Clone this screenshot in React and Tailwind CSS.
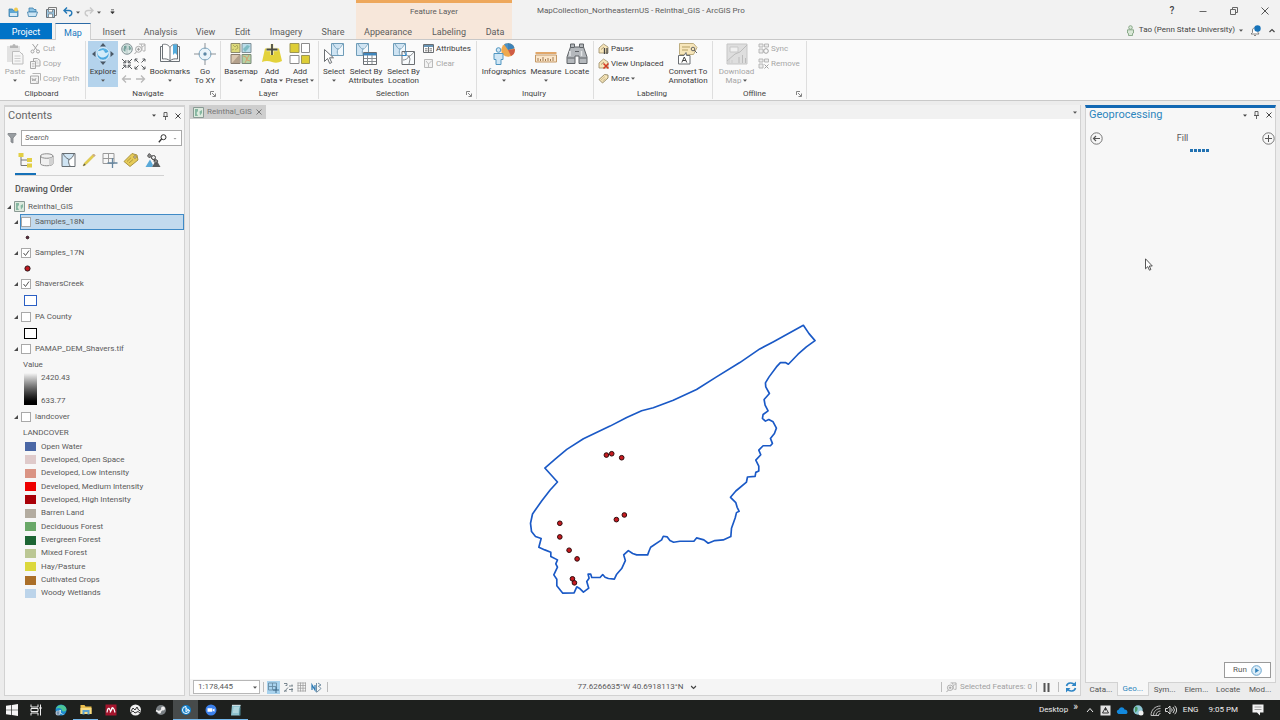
import { useState } from 'react';

const blue = '#2f86c6';
const dark = '#6a6e72';
const teal = '#6f9cb8';
const pale = '#cfe4f3';
const sand = '#f7e6ba';

const mainTabs = [
  { label: 'Insert', width: 'w-[46px]' },
  { label: 'Analysis', width: 'w-[47px]' },
  { label: 'View', width: 'w-[43px]' },
  { label: 'Edit', width: 'w-[31px]' },
  { label: 'Imagery', width: 'w-[56px]' },
  { label: 'Share', width: 'w-[38px]' },
];

const layerTabs = [
  { label: 'Appearance', width: 'w-[64px]' },
  { label: 'Labeling', width: 'w-[58px]' },
  { label: 'Data', width: 'w-[34px]' },
];

const landcover = [
  ['Open Water', 'bg-[#4a67a5]'],
  ['Developed, Open Space', 'bg-[#dfcaca]'],
  ['Developed, Low Intensity', 'bg-[#da9484]'],
  ['Developed, Medium Intensity', 'bg-[#ee0000]'],
  ['Developed, High Intensity', 'bg-[#a90008]'],
  ['Barren Land', 'bg-[#b3aca0]'],
  ['Deciduous Forest', 'bg-[#69a868]'],
  ['Evergreen Forest', 'bg-[#1d6534]'],
  ['Mixed Forest', 'bg-[#bbc794]'],
  ['Hay/Pasture', 'bg-[#dcd83c]'],
  ['Cultivated Crops', 'bg-[#ab6f28]'],
  ['Woody Wetlands', 'bg-[#bcd4ea]'],
];

const samplePoints = [
  [319, 435], [335, 431], [365, 443], [373, 615], [349, 629], [179, 640],
  [179, 681], [207, 721], [231, 747], [217, 807], [223, 819],
];

const watershed =
  'M911 45 928 70 946 91 920 110 895 132 866 162 857 157 842 157 830 170 808 200 797 218 798 230 809 250 793 268 796 285 805 302 790 313 788 325 797 333 807 328 820 335 830 354 824 370 812 385 818 400 812 407 790 407 777 420 783 434 768 450 777 468 777 483 768 487 766 499 743 501 740 516 708 543 692 562 708 578 712 592 718 604 710 608 706 624 695 655 693 680 670 690 645 692 625 700 612 690 590 684 582 694 540 694 521 697 510 692 502 681 490 679 485 690 452 712 447 724 443 735 410 735 398 731 385 722 371 735 376 752 365 776 350 793 343 808 325 806 315 802 308 794 300 803 275 803 272 793 264 793 267 805 260 815 266 835 250 847 240 837 230 831 222 849 188 850 170 828 170 808 161 795 172 772 167 762 172 750 152 740 152 727 134 720 116 712 123 686 106 680 94 665 91 640 97 612 125 572 150 540 172 516 134 474 165 447 200 418 250 386 330 348 380 322 425 302 460 293 520 270 590 238 650 200 720 157 780 116 820 95Z';

function Icon({ w = 22, h = 22, className = '', children }) {
  return (
    <svg width={w} height={h} viewBox={`0 0 ${w} ${h}`} fill="none" className={`shrink-0 ${className}`} aria-hidden="true">
      {children}
    </svg>
  );
}

function Caret({ className = 'text-[#555555]' }) {
  return (
    <Icon w={4} h={3} className={className}>
      <path d="M0 .5h4L2 2.7z" fill="currentColor" />
    </Icon>
  );
}

/* Ribbon icons */

function PasteIcon() {
  return (
    <Icon>
      <path d="M3 3h13v7h3v11H8v-2H3z" fill="#e2e2e2" />
      <path d="M6 2.500h2.500a1.500 1.500 0 0 1 3 0H14V5H6z" fill="#b5b5b5" />
      <path d="M8.500 8.500h7l3.500 3.500v9H8.500z" fill="#f6f6f6" stroke="#bdbdbd" />
      <path d="M10.500 13h6M10.500 15.500h6M10.500 18h6" stroke="#cccccc" />
    </Icon>
  );
}

function CutIcon() {
  return (
    <Icon w={11} h={11}>
      <path d="M2.500 1 7 7M8 1 4 7" stroke="#a3a3a3" />
      <circle cx="2.500" cy="8.500" r="1.500" stroke="#a3a3a3" />
      <circle cx="8" cy="8.500" r="1.500" stroke="#a3a3a3" />
    </Icon>
  );
}

function CopyIcon() {
  return (
    <Icon w={11} h={11}>
      <path d="M3.500.5h4l2.500 2V8H3.500z" fill="#f3f3f3" stroke="#a8a8a8" />
      <path d="M.5 3.500h5v7h-5z" fill="#f3f3f3" stroke="#a8a8a8" />
      <path d="M2 5.500h2.500M2 7h2.500M2 8.500h2.500M5 3h3M6.500 5h2" stroke="#bbbbbb" strokeWidth=".7" />
    </Icon>
  );
}

function CopyPathIcon() {
  return (
    <Icon w={11} h={11}>
      <path d="M2.500.5h8v7" stroke="#b5b5b5" />
      <path d="M.5 3h8v7.500h-8z" fill="#f3f3f3" stroke="#a8a8a8" />
      <path d="m2 5 .8 3L4 5.800 5 8l1-3" stroke="#999999" strokeWidth=".8" />
      <path d="M6.500 9h1" stroke="#999999" />
    </Icon>
  );
}

function ExploreIcon() {
  return (
    <Icon>
      <path d="M11 0l3 3.500H8zM11 22l3-3.500H8zM0 11l3.500-3v6zM22 11l-3.500-3v6z" fill="#4b5967" />
      <circle cx="11" cy="11" r="6.300" fill="#4da9e0" stroke="#e8f5fd" />
      <path d="M5.500 9C7 6 12 6 12.500 8.500S15 9 16.500 9 15 14 11.500 14.500 5 12 5.500 9z" fill="#d2ecfa" />
      <path d="M6 8c2-3 8-3 10 0-3 1-3-1-5-1s-3 1.500-5 1z" fill="#58b3e4" />
    </Icon>
  );
}

function GlobeIcon() {
  return (
    <Icon w={12} h={12}>
      <circle cx="6" cy="6" r="5.300" fill="#dbe9e5" stroke="#6a7a80" strokeWidth=".8" />
      <path d="M3 3c2-1.500 3 0 2.500 1.500S4 6 4.500 7.500 3.500 9 2.500 7.500zM7.500 2.500c2 .5 2.500 2 2.500 3.500L8 7.500z" fill="#76a29b" />
      <path d="M6 1v10M1 6h10" stroke="#8ba0a5" strokeWidth=".5" />
    </Icon>
  );
}

function ZoomLayerIcon({ size = 12 }) {
  return (
    <svg width={size} height={size} viewBox="0 0 12 12" fill="none" aria-hidden="true">
      <path d="M5 1h6v7H9" stroke="#a8a8a8" strokeWidth=".9" />
      <path d="m7 1 1 3 3-2M8 4v4" stroke="#a8a8a8" strokeWidth=".8" />
      <circle cx="4.500" cy="6.300" r="3" fill="#f4f4f4" stroke="#999999" strokeWidth=".8" />
      <path d="M3 6.300h3M4.500 4.800v3M2.500 8.800.5 11" stroke="#999999" strokeWidth=".9" />
    </svg>
  );
}

function FixedZoomIcon({ out = false }) {
  return (
    <Icon w={12} h={12}>
      <path d="m1 1 3.500 3.500M11 1 7.500 4.500M1 11l3.500-3.500M11 11 7.500 7.500" stroke="#55585c" />
      {out ? (
        <path d="M1 3.500V1h2.500M8.500 1H11v2.500M1 8.500V11h2.500M8.500 11H11V8.500" stroke="#55585c" />
      ) : (
        <path d="M2 4.800h2.800V2M7.200 2v2.800H10M2 7.200h2.800V10M7.200 10V7.200H10" stroke="#55585c" />
      )}
    </Icon>
  );
}

function ArrowIcon({ right = false }) {
  return (
    <Icon w={11} h={10}>
      <path d={right ? 'M1 5h8M6 1.500 9.500 5 6 8.500' : 'M10 5H2M5 1.500 1.500 5 5 8.500'} stroke="#b9b9b9" strokeWidth="1.300" />
    </Icon>
  );
}

function BookmarksIcon() {
  return (
    <Icon>
      <path d="M3 3.500H1.500v15H20.500v-15H19" stroke="#6b7176" />
      <path d="M11 4.500C9 1 6 1 3.500 1.500v14.500c3-.5 6 0 7.500 2.200C12.500 16 15.500 15.500 18.500 16V1.500C16 1 13 1 11 4.500zV18" fill="#fdfdfd" stroke="#6b7176" />
      <path d="M14 1.500h4V12l-2-2-2 2z" fill="#54acdc" />
    </Icon>
  );
}

function GoToIcon() {
  return (
    <Icon>
      <circle cx="11" cy="11" r="6" fill="#eaf4fa" stroke="#7da9c4" />
      <path d="M11 0v6M11 16v6M0 11h6M16 11h6" stroke="#8b9298" />
      <circle cx="11" cy="11" r="1.700" fill="#5c87a5" />
    </Icon>
  );
}

function BasemapIcon() {
  return (
    <Icon>
      <path d="M1 .5h9v9H1z" fill="#ddda7c" stroke="#8c8a6c" />
      <path d="m3 2 2 2 2-2 1 3-3 2M2 7l2-1" stroke="#a5a155" strokeWidth=".8" />
      <path d="M12 .5h9v9h-9z" fill="#b9dce9" stroke="#7f8f96" />
      <path d="m13 6 4-4 3 1-2 3-3 3z" fill="#7fbcc4" />
      <path d="M1 11.500h9v9H1z" fill="#dac8b1" stroke="#877b6e" />
      <path d="m2 20 7-8v8z" fill="#b3a08b" />
      <path d="M12 11.500h9v9h-9z" fill="#b4d3a4" stroke="#7b8a7a" />
      <path d="m13 13 3 1 1 3 3 1M19 12l-4 8" stroke="#d4a170" />
    </Icon>
  );
}

function AddDataIcon() {
  return (
    <Icon>
      <path d="M4 5.500h14L21 18q-5 3-10 1T1 19z" fill="#e3d23b" />
      <path d="M11 1v11M5.500 6.500h11" stroke="#f7f2bd" strokeWidth="3.400" />
      <path d="M11 1v11M5.500 6.500h11" stroke="#4b4c44" strokeWidth="1.800" />
    </Icon>
  );
}

function AddPresetIcon() {
  return (
    <Icon>
      <path d="M1 .5h9v9H1z" fill="#ddcd36" stroke="#9c9657" />
      <path d="M12.500.5h8v9h-8zM1 12.500h9v8H1z" fill="#ffffff" stroke="#8c8c8c" />
      <path d="M12.500 12.500h8v8h-8z" fill="#ddcd36" stroke="#9c9657" />
    </Icon>
  );
}

function MapSheet({ x = 0, y = 0 }) {
  return (
    <g transform={`translate(${x} ${y})`}>
      <path d="M.5.5h12v12H.5z" fill={pale} stroke={teal} />
      <path d="M7 6.500C8 4 10 2 12 1v11H6c0-2 0-4 1-5.500z" fill="#f2f8fc" />
      <path d="M2 1c2 3 3 5 5 5s3-3 5-5M7 6c-1 2-1 4 0 6" stroke={teal} strokeWidth=".9" />
    </g>
  );
}

function SelectIcon() {
  return (
    <Icon>
      <MapSheet x={8} y={0} />
      <path d="M1.500 6.500v12l3-3 2.200 5 2-1-2.200-4.700h4z" fill="#ffffff" stroke={dark} />
    </Icon>
  );
}

function SelectAttributesIcon() {
  return (
    <Icon>
      <MapSheet x={1} y={0} />
      <path d="M8.500 9.500h13v12h-13z" fill="#ffffff" stroke={dark} />
      <path d="M8.500 10h13v2.500h-13z" fill="#3f86bd" />
      <path d="M9 15.500h12M9 18.500h12M12.500 12v9M17 12v9" stroke="#878d92" />
    </Icon>
  );
}

function SelectLocationIcon() {
  return (
    <Icon>
      <MapSheet x={0} y={0} />
      <path d="M9 8.500h12.500v13H9z" fill="#f8fbfd" stroke={dark} />
      <path d="M11 9c2 3 3 4 5 4s3-2 5-4M16 13c-1 3-4 4-6 4M16 13l1 3-1 5" stroke={dark} strokeWidth=".8" />
      <path d="M9 12.500h4v-4" stroke={blue} strokeWidth="1.200" />
    </Icon>
  );
}

function AttributesIcon() {
  return (
    <Icon w={11} h={11}>
      <path d="M.5 1.500h10v8H.5z" fill="#ffffff" stroke={dark} />
      <path d="M1 2h9v2H1z" fill="#6894b5" />
      <path d="M2 5.800h2.500M2 7.800h2.500M6.500 5.800H9M6.500 7.800H9M5.500 4v5" stroke="#777777" />
    </Icon>
  );
}

function ClearIcon() {
  return (
    <Icon w={11} h={11}>
      <path d="M1.500 1.500h8v8h-8z" fill="#f3f3f3" stroke="#b9b9b9" />
      <path d="m3 3 2.500 3L9 2.500M5.500 6v3" stroke="#bdbdbd" />
    </Icon>
  );
}

function InfographicsIcon() {
  return (
    <Icon>
      <circle cx="15" cy="7" r="6.800" fill="#eea94f" />
      <path d="M15 7 11 1.300A6.800 6.800 0 0 1 16 .3z" fill="#4b92c6" />
      <path d="M15 7V.2a6.800 6.800 0 0 1 6.600 5z" fill="#3d83b9" />
      <path d="M15 7l6.800-1A6.800 6.800 0 0 1 18 13z" fill="#cf5c45" />
      <circle cx="5.500" cy="7" r="2.300" fill="#cfe6f5" stroke="#5196c1" />
      <path d="M1 10.500h9v6H8v5H3v-5H1z" fill="#cfe6f5" stroke="#5196c1" />
    </Icon>
  );
}

function MeasureIcon() {
  return (
    <Icon>
      <path d="M.5 10h21" stroke="#d98b3a" strokeWidth="1.500" />
      <path d="M.5 12h21v7H.5z" fill="#fbe6ca" stroke="#c39866" />
      <path d="M3 18v-3M5.500 18v-2M8 18v-4M10.500 18v-2M13 18v-3M15.500 18v-2M18 18v-4" stroke="#976f44" strokeWidth=".9" />
    </Icon>
  );
}

function LocateIcon() {
  return (
    <Icon>
      <path d="M4.500 1h4v3h5V1h4v3l3.500 10v6.500h-8V13h-4v7.500H1V14L4.500 4z" fill="#b4b8bc" stroke="#5f6367" />
      <path d="M4.500 4.500h4M13.500 4.500h4M1.500 15h7M13.500 15h7M9 8.500h4" stroke="#5f6367" />
      <path d="M4 8v5M15.500 8v5" stroke="#e4e6e8" strokeWidth="1.500" />
    </Icon>
  );
}

function LabelTag({ mark }) {
  return (
    <Icon w={11} h={11}>
      <path d="M1 5 5.500 1 10 4v6H1z" fill={sand} stroke="#9b8c68" strokeWidth=".8" />
      <path d="M3 6.500 6 4" stroke="#9b8c68" strokeWidth=".8" />
      {mark === 'pause' && <path d="M6.500 5v6M9 5v6" stroke="#444444" strokeWidth="1.300" />}
      {mark === 'cross' && <path d="m5.500 5.500 5 5M10.500 5.500l-5 5" stroke="#d13a24" strokeWidth="1.500" />}
    </Icon>
  );
}

function MoreLabelIcon() {
  return (
    <Icon w={11} h={11}>
      <path d="M1 6.500 6.500 1.500 10 2v3L4.500 10z" fill={sand} stroke="#8f825f" strokeWidth=".9" />
      <path d="m3 7 4-3.500M4.500 8l3-2.500" stroke="#b7a67b" strokeWidth=".7" />
    </Icon>
  );
}

function ConvertIcon() {
  return (
    <Icon>
      <path d="M2.500.5h14l3.500 4-3.500 7h-14z" fill={sand} stroke="#bfae80" />
      <path d="M5 4h8M5 7h6" stroke="#b59f65" />
      <circle cx="16" cy="6" r="1.800" stroke="#666666" />
      <path d="m17 7 3 3" stroke="#666666" />
      <path d="M1.500 12.500H7l2-3 .5 3H13v8.500H1.500z" fill="#ffffff" stroke={dark} />
      <path d="m4.800 19.500 2.500-5.500 2.500 5.500M5.800 17.500h3" stroke="#444444" />
    </Icon>
  );
}

function DownloadMapIcon() {
  return (
    <Icon>
      <path d="M1 1h20v20H1z" fill="#dedede" stroke="#c6c6c6" />
      <path d="M4 4h8v5H4z" fill="#f0f0f0" stroke="#c8c8c8" />
      <path d="M1 18 9 11l5-2 7-7M13 20v-6M16.500 20v-8M19.500 20v-5" stroke="#bcbcbc" />
      <path d="M3 20v-4M6 20v-3" stroke="#cccccc" />
    </Icon>
  );
}

function SyncIcon({ cross = false }) {
  return (
    <Icon w={11} h={11}>
      <path d="M1 1h4v3H1zM6.500 1h4v3h-4zM1 6h4v4H1z" fill="#ececec" stroke="#b2b2b2" strokeWidth=".9" />
      {cross ? <path d="m6.500 6.500 4 4M10.500 6.500l-4 4" stroke="#a0a0a0" /> : <circle cx="8" cy="8" r="2.300" stroke="#a0a0a0" />}
    </Icon>
  );
}

/* Ribbon building blocks */

function BigButton({ icon, lines, width, active = false, disabled = false, caret }) {
  return (
    <button
      type="button"
      disabled={disabled}
      className={`flex h-[46px] shrink-0 flex-col items-center pt-0.5 leading-[9px] ${width} ${active ? 'bg-[#b4d3ec]' : ''} ${disabled ? 'text-[#a6a6a6]' : 'text-[#3c3c3c]'}`}
    >
      {icon}
      <span className="mt-[2px] whitespace-nowrap">{lines[0]}</span>
      <span className="flex h-[9px] items-center gap-0.5 whitespace-nowrap">
        {lines[1]}
        {caret && <Caret />}
      </span>
    </button>
  );
}

function SmallButton({ icon, label, disabled = false, caret = false }) {
  return (
    <button
      type="button"
      disabled={disabled}
      className={`flex h-[15px] items-center gap-[2px] whitespace-nowrap ${disabled ? 'text-[#a6a6a6]' : 'text-[#3c3c3c]'}`}
    >
      {icon}
      {label}
      {caret && <Caret />}
    </button>
  );
}

function RibbonGroup({ label, width, launcher = false, children }) {
  return (
    <section aria-label={label} className={`my-px flex shrink-0 flex-col border-r border-[#dedede] pl-[2px] ${width}`}>
      <div className="flex h-[48px]">{children}</div>
      <div className={`relative text-center leading-[10px] text-[#444444] ${launcher ? 'pr-3' : 'pr-1'}`}>
        {label}
        {launcher && (
          <button type="button" aria-label={`${label} options`} className="absolute right-1 top-0.5">
            <Icon w={6} h={6}>
              <path d="M.5 4V.5H4M2 2l3 3M5.500 2.500v3h-3" stroke="#777777" strokeWidth=".9" />
            </Icon>
          </button>
        )}
      </div>
    </section>
  );
}

function QuickAccess() {
  return (
    <div className="flex h-[23px] items-center pl-2 pt-px">
      <button type="button" aria-label="New project" className="w-[19px]">
        <Icon w={11} h={11}>
          <path d="M1 2h3.500l1 1.500H10v6H1z" fill="#5da7d4" stroke="#3c7faa" strokeWidth=".8" />
          <path d="M2 6h7v3H2z" fill="#d3e9f6" />
          <circle cx="8" cy="2.500" r="2" fill="#f1cb51" />
        </Icon>
      </button>
      <button type="button" aria-label="Open project" className="w-[19px]">
        <Icon w={11} h={11}>
          <path d="M2 1h4l1 1.500h2V5H2z" fill="#8dc4e6" stroke="#3c7faa" strokeWidth=".8" />
          <path d="M.5 5h10L9 9.500H1.500z" fill="#cbe5f5" stroke="#3c7faa" strokeWidth=".8" />
        </Icon>
      </button>
      <button type="button" aria-label="Save project" className="w-[17px]">
        <Icon w={11} h={11}>
          <path d="M2.500.5h8v8h-8z" fill="#f5f5f5" stroke="#7c7c7c" />
          <path d="M.5 2.500h8v8h-8z" fill="#9cc7e2" stroke="#6b7177" />
          <path d="M2.500 7h4v3.500h-4zM2.500 2.500h4V5h-4z" fill="#ffffff" stroke="#6b7177" strokeWidth=".7" />
        </Icon>
      </button>
      <button type="button" aria-label="Undo" className="flex w-[21px] items-center gap-[3px]">
        <Icon w={10} h={10}>
          <path d="M4 .5 1 3.500l3 3M1 3.500h5c4 0 3.500 5 0 5.500" stroke="#2277b6" strokeWidth="1.400" />
        </Icon>
        <Caret />
      </button>
      <button type="button" aria-label="Redo" className="flex w-[26px] items-center gap-[3px]">
        <Icon w={10} h={10}>
          <path d="m6 .5 3 3-3 3M9 3.500H4C0 3.500.500 8.500 4 9" stroke="#c9c9c9" strokeWidth="1.400" />
        </Icon>
        <Caret />
      </button>
      <button type="button" aria-label="Customize Quick Access Toolbar">
        <Icon w={5} h={6}>
          <path d="M1 .8h3M.8 2.800h3.400L2.500 4.800z" fill="#333333" stroke="#333333" strokeWidth=".7" />
        </Icon>
      </button>
    </div>
  );
}

function TitleArea() {
  return (
    <header className="flex h-10 border-b border-[#c8c8c8] bg-[#f2f2f2] text-[#5c5c5c]">
      <div className="flex w-[356px] shrink-0 flex-col">
        <QuickAccess />
        <nav aria-label="Ribbon tabs" className="flex h-4 text-[9px] leading-[18px]">
          <button type="button" className="mr-[3px] w-[52px] bg-[#0173c7] text-white">Project</button>
          <button type="button" className="-mb-px h-[17px] w-[36px] border border-b-0 border-t-[#2b6aa6] border-x-[#d0d0d0] bg-[#fafafa] text-[#1679c0]">
            Map
          </button>
          {mainTabs.map((tab) => (
            <button key={tab.label} type="button" className={tab.width}>{tab.label}</button>
          ))}
        </nav>
      </div>
      <div className="flex w-[156px] shrink-0 flex-col border-t-[3px] border-[#eea85c] bg-[#f7e7da]">
        <div className="h-5 text-center leading-[17px]">Feature Layer</div>
        <nav aria-label="Feature layer tabs" className="flex h-4 text-[9px] leading-[18px]">
          {layerTabs.map((tab) => (
            <button key={tab.label} type="button" className={tab.width}>{tab.label}</button>
          ))}
        </nav>
      </div>
      <h1 className="flex-1 whitespace-nowrap pl-[25px] leading-[21px]">MapCollection_NortheasternUS - Reinthal_GIS - ArcGIS Pro</h1>
      <div className="flex shrink-0 flex-col items-end text-[#444444]">
        <div className="flex h-[21px] items-center gap-[23px] pr-[11px]">
          <button type="button" aria-label="Help" className="w-2 text-[10px] font-medium">?</button>
          <button type="button" aria-label="Minimize" className="py-1">
            <Icon w={8} h={8}><path d="M.5 4.500h7" stroke="#666666" /></Icon>
          </button>
          <button type="button" aria-label="Restore">
            <Icon w={8} h={8}>
              <path d="M.5 2.500h5v5h-5zM2.500 2.500v-2h5v5h-2" stroke="#666666" />
            </Icon>
          </button>
          <button type="button" aria-label="Close">
            <Icon w={8} h={8}><path d="m.5.5 7 7M7.500.500l-7 7" stroke="#555555" /></Icon>
          </button>
        </div>
        <div className="flex h-[18px] items-center pr-[5px]">
          <button type="button" className="flex items-center gap-1">
            <Icon w={9} h={11}>
              <circle cx="4.500" cy="2.500" r="1.800" fill="#d9e8d7" stroke="#769b76" strokeWidth=".8" />
              <path d="M1.500 4.800h6V8l-1 .5v2h-4v-2l-1-.5z" fill="#d9e8d7" stroke="#769b76" strokeWidth=".8" />
            </Icon>
            Tao (Penn State University)
            <Caret />
          </button>
          <button type="button" aria-label="Notifications" className="ml-[7px]">
            <Icon w={11} h={11}>
              <path d="M1 9h8L8 7.500V5C8 2 2.500 2 2.500 5v2.500zM4 10.500h2" fill="#ffffff" stroke="#777777" strokeWidth=".9" />
              <circle cx="7.500" cy="3.500" r="3.200" fill="#1673ba" />
            </Icon>
          </button>
          <button type="button" aria-label="Collapse ribbon" className="ml-2">
            <Icon w={6} h={5}><path d="m.5 4 2.500-2.500L5.500 4" stroke="#444444" strokeWidth="1.200" /></Icon>
          </button>
        </div>
      </div>
    </header>
  );
}

function Ribbon() {
  return (
    <div className="flex h-[61px] overflow-hidden border-b border-[#c9c9c9] bg-[#fafafa]">
      <RibbonGroup label="Clipboard" width="w-[86px]">
        <BigButton icon={<PasteIcon />} lines={['Paste']} width="w-[26px]" caret disabled />
        <div className="ml-[2px]">
          <SmallButton icon={<CutIcon />} label="Cut" disabled />
          <SmallButton icon={<CopyIcon />} label="Copy" disabled />
          <SmallButton icon={<CopyPathIcon />} label="Copy Path" disabled />
        </div>
      </RibbonGroup>
      <RibbonGroup label="Navigate" width="w-[135px]" launcher>
        <BigButton icon={<ExploreIcon />} lines={['Explore']} width="w-[30px]" caret active />
        <div className="grid h-[45px] w-[29px] shrink-0 grid-cols-2 place-items-center pl-0.5">
          <button type="button" aria-label="Full extent"><GlobeIcon /></button>
          <button type="button" aria-label="Zoom to selection"><ZoomLayerIcon /></button>
          <button type="button" aria-label="Fixed zoom in"><FixedZoomIcon /></button>
          <button type="button" aria-label="Fixed zoom out"><FixedZoomIcon out /></button>
          <button type="button" aria-label="Previous extent"><ArrowIcon /></button>
          <button type="button" aria-label="Next extent"><ArrowIcon right /></button>
        </div>
        <BigButton icon={<BookmarksIcon />} lines={['Bookmarks']} width="w-[46px]" caret />
        <BigButton icon={<GoToIcon />} lines={['Go', 'To XY']} width="w-[24px]" />
      </RibbonGroup>
      <RibbonGroup label="Layer" width="w-[98px]">
        <BigButton icon={<BasemapIcon />} lines={['Basemap']} width="w-[36px]" caret />
        <BigButton icon={<AddDataIcon />} lines={['Add', 'Data']} width="w-[26px]" caret />
        <BigButton icon={<AddPresetIcon />} lines={['Add', 'Preset']} width="w-[30px]" caret />
      </RibbonGroup>
      <RibbonGroup label="Selection" width="w-[158px]" launcher>
        <BigButton icon={<SelectIcon />} lines={['Select']} width="w-[26px]" caret />
        <BigButton icon={<SelectAttributesIcon />} lines={['Select By', 'Attributes']} width="w-[38px]" />
        <BigButton icon={<SelectLocationIcon />} lines={['Select By', 'Location']} width="w-[37px]" />
        <div className="pl-px">
          <SmallButton icon={<AttributesIcon />} label="Attributes" />
          <SmallButton icon={<ClearIcon />} label="Clear" disabled />
        </div>
      </RibbonGroup>
      <RibbonGroup label="Inquiry" width="w-[117px]">
        <BigButton icon={<InfographicsIcon />} lines={['Infographics']} width="w-[50px]" caret />
        <BigButton icon={<MeasureIcon />} lines={['Measure']} width="w-[34px]" caret />
        <BigButton icon={<LocateIcon />} lines={['Locate']} width="w-[28px]" />
      </RibbonGroup>
      <RibbonGroup label="Labeling" width="w-[119px]">
        <div className="w-[69px] pl-0.5">
          <SmallButton icon={<LabelTag mark="pause" />} label="Pause" />
          <SmallButton icon={<LabelTag mark="cross" />} label="View Unplaced" />
          <SmallButton icon={<MoreLabelIcon />} label="More" caret />
        </div>
        <BigButton icon={<ConvertIcon />} lines={['Convert To', 'Annotation']} width="w-[46px]" />
      </RibbonGroup>
      <RibbonGroup label="Offline" width="w-[94px]" launcher>
        <BigButton icon={<DownloadMapIcon />} lines={['Download', 'Map']} width="w-[43px]" caret disabled />
        <div>
          <SmallButton icon={<SyncIcon />} label="Sync" disabled />
          <SmallButton icon={<SyncIcon cross />} label="Remove" disabled />
        </div>
      </RibbonGroup>
    </div>
  );
}

/* Contents pane */

function PaneButtons() {
  return (
    <div className="flex items-center gap-[7px]">
      <button type="button" aria-label="Pane options"><Caret className="text-[#444444]" /></button>
      <button type="button" aria-label="Auto hide">
        <Icon w={5} h={8}>
          <path d="M1 .5h3v4H1zM0 4.500h5M2.500 4.500V8" stroke="#555555" strokeWidth=".9" />
        </Icon>
      </button>
      <button type="button" aria-label="Close pane">
        <Icon w={6} h={6}><path d="m.5.5 5 5M5.500.500l-5 5" stroke="#444444" /></Icon>
      </button>
    </div>
  );
}

function MapDocIcon() {
  return (
    <Icon w={11} h={11}>
      <path d="M.5.5h10v10H.5z" fill="#dceade" stroke="#8a9a94" />
      <path d="M2 2h3v2L3.500 6 5 9H2zM6.500 4.500 9 3v3L7 8.500z" fill="#86b7a1" />
    </Icon>
  );
}

function Expander() {
  return (
    <Icon w={4} h={4}><path d="M4 0v4H0z" fill="#4a4a4a" /></Icon>
  );
}

function LayerRow({ name, checked = false, selected = false }) {
  return (
    <div className="flex h-4 items-center gap-0.5 pl-[9px]">
      <Expander />
      <label className={`flex h-4 flex-1 items-center gap-1 border ${selected ? 'border-[#3f8ac6] bg-[#c2daee]' : 'border-transparent'}`}>
        <span className="relative h-[10px] w-[10px]">
          <input
            type="checkbox"
            defaultChecked={checked}
            className="peer block h-[10px] w-[10px] appearance-none border border-[#a9a9a9] bg-white"
          />
          <svg viewBox="0 0 10 10" fill="none" className="pointer-events-none absolute inset-0 hidden peer-checked:block" aria-hidden="true">
            <path d="m2.500 5 2 2.500L8 2.500" stroke="#555555" />
          </svg>
        </span>
        {name}
      </label>
    </div>
  );
}

function PointSymbol({ r, color }) {
  return (
    <div className="flex h-[15px] items-center pl-[19px]">
      <Icon w={7} h={7}><circle cx="3.500" cy="3.500" r={r} fill={color} stroke="#2a1518" /></Icon>
    </div>
  );
}

function ContentsToolbar() {
  return (
    <div className="ml-[10px] mr-5 mt-1.5 flex border-b border-[#d2d2d2]">
      <button type="button" aria-label="List by drawing order" className="-mb-px flex h-[23px] w-[21px] justify-center border-b-2 border-[#1671b8]">
        <Icon w={15} h={16}>
          <path d="M3 3v10.500h6M3 8h6" stroke="#777777" />
          <path d="M.5 1h5v4h-5zM9 6h5v4H9zM9 11.500h5v4H9z" fill="#e2cf45" />
        </Icon>
      </button>
      <button type="button" aria-label="List by data source" className="flex h-[23px] w-[22px] justify-center">
        <Icon w={16} h={16}>
          <path d="M1.500 4v7.500c0 3 12.500 3 12.500 0V4c0-3-12.500-3-12.500 0z" fill="#f0f0f0" stroke="#8e8e8e" />
          <path d="M1.500 4c0 3 12.500 3 12.500 0" stroke="#8e8e8e" />
          <path d="M10 6.500 14 5v7l-4 2z" fill="#d2d2d2" />
        </Icon>
      </button>
      <button type="button" aria-label="List by selection" className="flex h-[23px] w-[21px] justify-center">
        <Icon w={15} h={16}>
          <path d="M1 1.500h13v13H1z" fill={pale} />
          <path d="M8 7.500c3-1 4-3 5-5.500h1v12H8z" fill="#ffffff" />
          <path d="M1 1.500h13v13H1zM8 7.500C5 6 3 4 2.500 2M8 7.500c3-1 4-3 5-5.500M8 7.500C7 10 8 12 9 14" stroke="#666d72" />
        </Icon>
      </button>
      <button type="button" aria-label="List by editing" className="flex h-[23px] w-[21px] justify-center">
        <Icon w={14} h={16}>
          <path d="m1 14 1.500-3L11.500 2 13 3.500 4 12.500z" fill="#e4cf4b" stroke="#cdb53a" strokeWidth=".6" />
          <path d="m1 14 1.200-2.500L3.700 13z" fill="#55524a" />
          <path d="m10.500 3 1.700 1.700L13.500 3.500 12 2z" fill="#c9a795" />
        </Icon>
      </button>
      <button type="button" aria-label="List by snapping" className="flex h-[23px] w-[21px] justify-center">
        <Icon w={16} h={16}>
          <path d="M1 1.500h11v10H1zM6.500 1.500v10M1 6.500h11" stroke="#9a9a9a" />
          <path d="M10.500 6v10M5.500 11h10" stroke="#6787a0" strokeWidth="1.300" />
        </Icon>
      </button>
      <button type="button" aria-label="List by labeling" className="flex h-[23px] w-[22px] justify-center">
        <Icon w={16} h={16}>
          <path d="m1 9.500 8-8L14 3l1 5-8 6.500z" fill="#e6cb58" stroke="#a28b38" strokeWidth=".9" />
          <circle cx="12" cy="5" r="1.200" fill="#ffffff" stroke="#765f2c" strokeWidth=".8" />
          <path d="m4 9.500 4-3.800M6 11l4-3.500" stroke="#a28b38" strokeWidth=".8" />
        </Icon>
      </button>
      <button type="button" aria-label="List by perspective imagery" className="flex h-[23px] w-[22px] justify-center">
        <Icon w={16} h={16}>
          <path d="M.5 15 5 7.500 8 13l-1 2z" fill="#5aa9d8" />
          <path d="M7 15 10 10l2-1 3.500 6z" fill="#5a5e60" />
          <path d="m4 1.500 2.500 2L4.500 6 2.500 4zM10.500 7l2.500 2-2 2.500-2-2z" fill="#8c8c8c" stroke="#444444" strokeWidth=".8" />
          <path d="m6 5 4 4" stroke="#444444" strokeWidth="1.300" />
          <circle cx="8.500" cy="5.500" r="2" fill="#e9e9e9" stroke="#444444" />
        </Icon>
      </button>
    </div>
  );
}

function ContentsPane() {
  return (
    <aside className="mx-1 mb-1 mt-1 w-[181px] shrink-0 border border-t-2 border-[#d2d2d2] bg-[#f7f7f7]">
      <div className="flex h-[17px] items-center justify-between pl-[3px] pr-[3px]">
        <h2 className="text-[11px] leading-[17px] text-[#666666]">Contents</h2>
        <PaneButtons />
      </div>
      <div className="mt-1.5 flex items-center pr-0.5">
        <button type="button" aria-label="Filter" className="flex w-4 pl-[2px]">
          <Icon w={10} h={12}>
            <path d="M1 1.500h8v1L6 6v5L4 10V6L1 2.500z" fill="#999ea2" stroke="#7b7f83" strokeWidth=".8" />
          </Icon>
        </button>
        <div className="flex h-4 flex-1 items-center border border-[#a8a8a8] bg-white pl-[3px] pr-1">
          <input aria-label="Search contents" placeholder="Search" className="w-full min-w-0 italic leading-3 outline-none placeholder:text-[#5f5f5f]" />
          <button type="button" aria-label="Search">
            <Icon w={9} h={9}>
              <circle cx="5.500" cy="3.200" r="2.500" stroke="#333333" />
              <path d="M3.600 5 .8 8.200" stroke="#333333" strokeWidth="1.300" />
            </Icon>
          </button>
          <button type="button" aria-label="Search options" className="ml-1.5">
            <Icon w={4} h={3}><path d="M.5 1h3L2 2.500z" fill="#999999" /></Icon>
          </button>
        </div>
      </div>
      <ContentsToolbar />
      <h3 className="mt-1.5 pl-[10px] text-[9px] font-medium leading-[14px] text-[#555555]">Drawing Order</h3>
      <div className="mt-[3px] flex h-[15px] items-center gap-[3px] pl-[2px]">
        <Expander />
        <MapDocIcon />
        Reinthal_GIS
      </div>
      <LayerRow name="Samples_18N" selected />
      <PointSymbol r={1.3} color="#5b2440" />
      <LayerRow name="Samples_17N" checked />
      <PointSymbol r={2.6} color="#c01820" />
      <LayerRow name="ShaversCreek" checked />
      <div className="flex h-[17px] items-center pl-[19px]">
        <span className="h-[11px] w-[13px] border border-[#2b5fc4] bg-white" />
      </div>
      <LayerRow name="PA County" />
      <div className="flex h-4 items-center pl-[19px]">
        <span className="h-[11px] w-[13px] border border-black bg-white" />
      </div>
      <LayerRow name="PAMAP_DEM_Shavers.tif" />
      <div className="pl-[18px] leading-[15px]">Value</div>
      <div className="mb-1 mt-px flex gap-1 pl-[19px]">
        <span className="h-8 w-[13px] bg-linear-to-b from-[#f7f7f7] to-black" />
        <div className="flex flex-col justify-between leading-[9px]">
          <span>2420.43</span>
          <span>633.77</span>
        </div>
      </div>
      <LayerRow name="landcover" />
      <div className="pl-[18px] leading-[15px]">LANDCOVER</div>
      <ul className="flex h-[160px] flex-col justify-between">
        {landcover.map(([name, color]) => (
          <li key={name} className="flex h-[13px] items-center gap-[5px] pl-5">
            <span className={`h-[9px] w-[11px] ${color}`} />
            {name}
          </li>
        ))}
      </ul>
    </aside>
  );
}

/* Map view */

function MapView() {
  return (
    <main className="mb-1 mt-1 flex min-w-0 flex-1 flex-col border-x border-b border-[#d2d2d2] bg-[#f5f5f5]">
      <div className="flex h-[14px] items-center justify-between bg-[#f1f1f1] pr-[3px]">
        <div className="flex h-full w-[76px] items-center bg-[#cecece] pl-[3px] text-[#777777]">
          <MapDocIcon />
          <span className="ml-[3px]">Reinthal_GIS</span>
          <button type="button" aria-label="Close Reinthal_GIS" className="ml-auto mr-1">
            <Icon w={6} h={6}><path d="m.5.5 5 5M5.500.500l-5 5" stroke="#777777" /></Icon>
          </button>
        </div>
        <button type="button" aria-label="Open views"><Caret /></button>
      </div>
      <div className="min-h-0 flex-1 bg-white">
        <svg viewBox="-930 -575 2670 1683" className="h-full w-full" role="img" aria-label="ShaversCreek watershed with sample points">
          <path d={watershed} fill="none" stroke="#1a59c6" strokeWidth="5" strokeLinejoin="round" />
          {samplePoints.map(([x, y]) => (
            <circle key={`${x}-${y}`} cx={x} cy={y} r="7" fill="#c61a1f" stroke="#2d0a0c" strokeWidth="3" />
          ))}
        </svg>
      </div>
      <div className="relative flex h-4 items-center px-[3px]">
        <div className="relative h-[14px] w-[67px] border border-[#b7b7b7] bg-white">
          <select aria-label="Map scale" className="block h-3 w-full appearance-none pl-1 leading-3 outline-none">
            <option>1:178,445</option>
          </select>
          <Icon w={4} h={3} className="pointer-events-none absolute right-[2px] top-[5px]">
            <path d="M0 .5h4L2 2.700z" fill="#555555" />
          </Icon>
        </div>
        <span className="mx-[3px] h-[10px] w-px bg-[#bcbcbc]" />
        <button type="button" aria-label="Grid snapping" className="flex h-[13px] w-[13px] items-center justify-center bg-[#a9d3ee]">
          <Icon w={11} h={11}>
            <path d="M.5 1h8v7h-8zM4.500 1v7M.5 4.500h8" stroke="#6a8ca4" strokeWidth=".9" />
            <path d="M8 5v6M5 8h6" stroke="#3d6a8b" />
          </Icon>
        </button>
        <button type="button" aria-label="Constraints" className="ml-[3px]">
          <Icon w={11} h={11}>
            <path d="M1 1.500h3v2H2.500M6 4h4M6 7.500h4M1.500 9.500 5 5.500M9 2.500V4M9 6v4M1 9h3" stroke="#6c7a84" strokeWidth=".9" />
          </Icon>
        </button>
        <button type="button" aria-label="Show grid" className="ml-[3px]">
          <Icon w={10} h={10}>
            <path d="M1 .5v9M3.500.500v9M6 .5v9M8.500.500v9M.5 1h8.500M.5 3.500h8.500M.5 6.200h8.500M.5 9h8.500" stroke="#9a9a9a" strokeWidth=".7" />
          </Icon>
        </button>
        <button type="button" aria-label="Corrections" className="ml-1">
          <Icon w={11} h={11}>
            <path d="M1 8V3l3 5V3" stroke="#2b79b3" strokeWidth="1.200" />
            <path d="M5.500 1v9.500M6 10 10 6.500 8 4.500M7 1l3 2-3 1.500" stroke="#64839a" strokeWidth=".9" />
          </Icon>
        </button>
        <span className="ml-[5px] h-[10px] w-px bg-[#bcbcbc]" />
        <button type="button" className="absolute left-1/2 top-0 flex h-4 -translate-x-1/2 items-center gap-[7px] pl-1">
          77.6266635°W 40.6918113°N
          <Icon w={6} h={5}><path d="m.5 1 2.500 2.500L5.500 1" stroke="#444444" strokeWidth="1.200" /></Icon>
        </button>
        <div className="ml-auto flex items-center text-[#a0a0a0]">
          <span className="mr-1 h-[10px] w-px bg-[#bcbcbc]" />
          <ZoomLayerIcon size={11} />
          <span className="ml-[3px]">Selected Features: 0</span>
          <span className="mx-1 h-[10px] w-px bg-[#bcbcbc]" />
          <button type="button" aria-label="Pause drawing" className="mx-0.5">
            <Icon w={7} h={9}><path d="M1.500 0v9M5.500 0v9" stroke="#555555" strokeWidth="2" /></Icon>
          </button>
          <span className="mx-1.5 h-[10px] w-px bg-[#bcbcbc]" />
          <button type="button" aria-label="Refresh">
            <Icon w={12} h={12}>
              <path d="M1.500 5C2.500 1.500 7.500 1 9.500 4M10.500 7C9.500 10.500 4.500 11 2.500 8" stroke={blue} strokeWidth="1.600" />
              <path d="M11 .5V5H6.500zM1 11.500V7h4.500z" fill={blue} />
            </Icon>
          </button>
        </div>
      </div>
    </main>
  );
}

/* Geoprocessing pane */

function GeoprocessingPane() {
  const [tab, setTab] = useState('Geo...');
  return (
    <aside className="relative mx-1 mb-1 mt-1 flex w-[191px] shrink-0 flex-col">
      <div className="flex flex-1 flex-col border border-t-[3px] border-[#d2d2d2] border-t-[#1268b3] bg-[#f7f7f7]">
        <div className="flex h-[14px] items-center justify-between pl-[3px] pr-[3px]">
          <h2 className="text-[11px] leading-[14px] text-[#2e86bd]">Geoprocessing</h2>
          <PaneButtons />
        </div>
        <div className="mt-[9px] flex items-center justify-between pl-1">
          <button type="button" aria-label="Back">
            <Icon w={13} h={13}>
              <circle cx="6.500" cy="6.500" r="5.700" stroke="#777777" />
              <path d="M10 6.500H3.500M6 4 3.500 6.500 6 9" stroke="#555555" strokeWidth="1.200" />
            </Icon>
          </button>
          <h3 className="text-[9px] leading-[14px] text-[#555555]">Fill</h3>
          <button type="button" aria-label="Add to model">
            <Icon w={13} h={13}>
              <circle cx="6.500" cy="6.500" r="5.700" stroke="#777777" />
              <path d="M3 6.500h7M6.500 3v7" stroke="#555555" />
            </Icon>
          </button>
        </div>
        <div role="progressbar" aria-label="Loading tool" className="ml-[104px] mt-1 flex gap-px">
          {[0, 1, 2, 3, 4].map((dot) => (
            <span key={dot} className="h-[3px] w-[3px] bg-[#2272b2]" />
          ))}
        </div>
        <button type="button" className="mb-1 ml-auto mr-1 mt-auto flex h-4 w-[47px] items-center justify-center gap-1 border border-[#9a9a9a] bg-white">
          Run
          <Icon w={11} h={11}>
            <circle cx="5.500" cy="5.500" r="4.800" fill="#dcedf8" stroke="#6aa5ce" />
            <path d="m4.200 3 3.800 2.500L4.200 8z" fill="#2f80ba" />
          </Icon>
        </button>
      </div>
      <div role="tablist" className="flex h-[13px] text-[#555555]">
        {['Cata...', 'Geo...', 'Sym...', 'Elem...', 'Locate', 'Mod...'].map((name) => (
          <button
            key={name}
            type="button"
            role="tab"
            aria-selected={tab === name}
            onClick={() => setTab(name)}
            className={`-mt-px w-8 leading-[13px] ${tab === name ? 'border-x border-b border-[#d2d2d2] bg-[#f7f7f7] text-[#2e86bd]' : ''}`}
          >
            {name}
          </button>
        ))}
      </div>
      <svg width="8" height="13" viewBox="0 0 8 13" className="absolute left-[60px] top-[153px]" aria-hidden="true">
        <path d="M.5.8v10l2.300-2.200 1.600 3.600 1.500-.7-1.600-3.500h3z" fill="#ffffff" stroke="#444444" strokeWidth=".9" />
      </svg>
    </aside>
  );
}

/* Windows taskbar */

function TaskButton({ label, state = '', width = 'w-[25px]', children }) {
  return (
    <button
      type="button"
      aria-label={label}
      className={`flex h-5 items-center justify-center ${width} ${state === 'active' ? 'border-b border-[#76b9ed] bg-[#474b4b]' : ''} ${state === 'open' ? 'border-b border-[#76b9ed]' : ''}`}
    >
      {children}
    </button>
  );
}

function Taskbar() {
  return (
    <footer className="flex h-5 items-center bg-[#1e201e] text-[#eeeeee]">
      <TaskButton label="Start" width="w-6">
        <Icon w={12} h={12}><path d="M0 1.700 5.300 1v4.700H0zM6 .9 12 0v5.700H6zM0 6.300h5.300V11L0 10.300zM6 6.300h6V12l-6-.9z" fill="#f5f5f5" /></Icon>
      </TaskButton>
      <TaskButton label="Task View" width="w-6">
        <Icon w={12} h={12}>
          <path d="M1 .5v2.500h7V.5M1 11.500V9h7v2.500M1 4.500h7v3H1zM10.500.500v11" stroke="#eeeeee" />
          <path d="M9.500 3h2v2h-2z" fill="#eeeeee" />
        </Icon>
      </TaskButton>
      <TaskButton label="Microsoft Edge">
        <Icon w={12} h={12}>
          <circle cx="6" cy="6" r="5.500" fill="#1c8ad1" />
          <path d="M1 5C2 0 10-.5 11.500 5c0 3-4 3-4.500 1.500C7 4 3 3 1 5z" fill="#4cc596" />
          <path d="M4.500 6c-1 3 2 5.500 5.500 4-3.500.5-5-1.500-4-4z" fill="#e6f6fb" />
          <circle cx="3" cy="9" r="2.500" fill="#a9bccd" />
          <path d="M3 7.500v3" stroke="#426a90" />
        </Icon>
      </TaskButton>
      <TaskButton label="File Explorer" state="open">
        <Icon w={12} h={11}>
          <path d="M.5 1h4l1 1.500h6V10H.5z" fill="#eabd4c" />
          <path d="M.5 4h11v6H.5z" fill="#f9dc83" />
          <path d="M2.500 6h7v4.500h-2V8h-3v2.500h-2z" fill="#5ba0d0" />
        </Icon>
      </TaskButton>
      <TaskButton label="Mendeley">
        <Icon w={12} h={12}>
          <path d="M.5.5h11v11H.5z" fill="#a5152d" />
          <path d="M2 8.500C2.500 4 4 3.500 4.500 5S6 8 6.500 5s2.500-1 3.500 3.500M5 8.500 7.500 4" stroke="#ffffff" strokeWidth="1.200" />
        </Icon>
      </TaskButton>
      <TaskButton label="Stratigraphy">
        <Icon w={13} h={12}>
          <circle cx="6.500" cy="6" r="5.500" fill="#f0f0f0" />
          <path d="m2 7 2-3 2 2 2-3 1.500 3 2 1M1 9l3-2 2 2 3-1.500 2 1.500" stroke="#333333" />
        </Icon>
      </TaskButton>
      <TaskButton label="Steam">
        <Icon w={12} h={12}>
          <circle cx="6" cy="6" r="5" fill="#797f83" />
          <path d="m1 6.500 3.500 1.800L7 5.500" stroke="#eeeeee" strokeWidth="1.600" />
          <circle cx="8" cy="4.500" r="2" fill="#eeeeee" />
          <circle cx="4.500" cy="8" r="1.500" fill="#eeeeee" />
        </Icon>
      </TaskButton>
      <TaskButton label="ArcGIS Pro" state="active">
        <Icon w={12} h={12}>
          <circle cx="6" cy="6" r="5" fill="#1482ce" />
          <path d="M6 2.500a3.500 3.500 0 1 0 3.500 3.500M6 2.500V8M6 4.500l3 1.500-3 1.500" stroke="#ffffff" />
        </Icon>
      </TaskButton>
      <TaskButton label="Zoom" state="open">
        <Icon w={12} h={12}>
          <circle cx="6" cy="6" r="5.500" fill="#3c81ec" />
          <path d="M2.500 4.300h4.800v3.500H2.500zM7.800 5.500l1.700-1v3.300l-1.700-1z" fill="#ffffff" />
        </Icon>
      </TaskButton>
      <TaskButton label="Notepad" state="open">
        <Icon w={11} h={12}>
          <path d="M2 1h8.500L9.500 11.500H1z" fill="#8fc3cf" />
          <path d="M3.500 4h5.500M3.200 6h5.500M3 8h5.500" stroke="#dff1f4" strokeWidth=".8" />
          <path d="M2 1.300h8.500" stroke="#dde5e8" />
          <path d="m9.500 4 1-.5v8H9z" fill="#4f8794" />
        </Icon>
      </TaskButton>
      <div className="ml-auto flex items-center pr-4">
        <span>Desktop</span>
        <span className="ml-[5px] h-4 text-[10px] leading-[10px]">»</span>
        <button type="button" aria-label="Show hidden icons" className="ml-2">
          <Icon w={8} h={6}><path d="m1 5 3-3.500L7 5" stroke="#eeeeee" /></Icon>
        </button>
        <Icon w={11} h={11} className="ml-[6px]">
          <path d="M.5.5h10v10H.5z" fill="#e2e2e2" />
          <path d="M5.500 2.500 2.500 8h6zM5.500 2.500v3" stroke="#333333" />
        </Icon>
        <Icon w={12} h={8} className="ml-[5px]">
          <path d="M2.500 8a2.300 2.300 0 0 1 .3-4.500C4 .5 7.500.500 8.500 3.500 12 3.500 12.500 8 9.500 8z" fill="#1389dd" />
        </Icon>
        <Icon w={11} h={11} className="ml-[5px]">
          <circle cx="5" cy="5" r="4.700" fill="#8dc6d4" />
          <path d="M2 2c3-1 3 2 2 4L2 7.500z" fill="#4b9b67" />
          <circle cx="8" cy="8" r="2.500" fill="#f0f0f0" />
        </Icon>
        <Icon w={11} h={11} className="ml-1.5">
          <path d="M1 10.500C1 5 5 1 10.500 1M3.500 10.500c0-4 3-7 7-7M6 10.500C6 8 8 6 10.500 6M1 10.500h8M8.500 10.500a2 2 0 0 1 2-2" stroke="#bcbcbc" />
        </Icon>
        <Icon w={12} h={10} className="ml-1">
          <path d="M.5 3.500h2L5 1v8L2.500 6.500h-2zM6.500 3.500q1.500 1.500 0 3M8 2q3 3 0 6M9.700.8q4 4.200 0 8.400" stroke="#eeeeee" strokeWidth=".9" />
        </Icon>
        <span className="ml-1.5">ENG</span>
        <span className="ml-[10px]">9:05 PM</span>
        <button type="button" aria-label="Notifications" className="ml-[14px]">
          <Icon w={12} h={12}>
            <path d="M.5.500h11v8H8V11.500L5 8.500H.5z" fill="#f2f2f2" />
            <path d="M2.500 3h7M2.500 5.500h7" stroke="#888888" strokeWidth=".8" />
          </Icon>
        </button>
      </div>
    </footer>
  );
}

export default function App() {
  return (
    <div className="flex h-screen flex-col overflow-hidden bg-[#ececec] font-[Roboto,'Noto_Sans',sans-serif] text-[8px] leading-3 text-[#5a5a5a]">
      <TitleArea />
      <Ribbon />
      <div className="flex min-h-0 flex-1">
        <ContentsPane />
        <MapView />
        <GeoprocessingPane />
      </div>
      <Taskbar />
    </div>
  );
}
